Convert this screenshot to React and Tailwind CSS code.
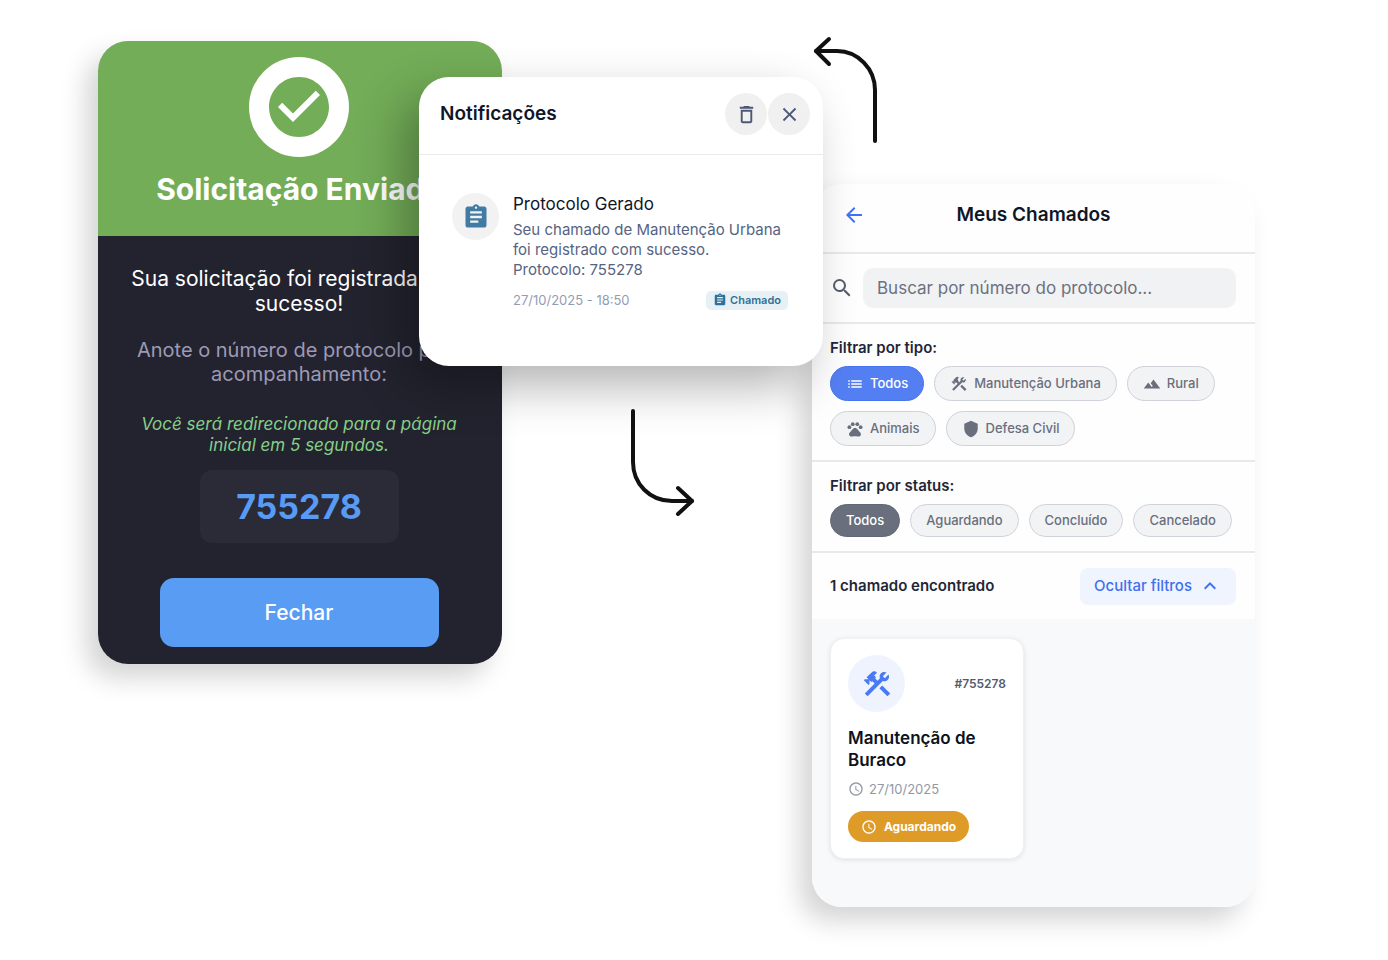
import { useState } from 'react'
import clsx from 'clsx'
import {
    MdAccessTime,
    MdArrowBack,
    MdAssignment,
    MdCheckCircle,
    MdClose,
    MdConstruction,
    MdDeleteOutline,
    MdKeyboardArrowUp,
    MdList,
    MdPets,
    MdSearch,
    MdShield,
    MdTerrain,
} from 'react-icons/md'

const TYPES = [
    { id: 'todos', label: 'Todos', icon: MdList },
    { id: 'manutencao', label: 'Manutenção Urbana', icon: MdConstruction },
    { id: 'rural', label: 'Rural', icon: MdTerrain },
    { id: 'animais', label: 'Animais', icon: MdPets },
    { id: 'defesa', label: 'Defesa Civil', icon: MdShield },
]

const STATUSES = ['Todos', 'Aguardando', 'Concluído', 'Cancelado']

function SuccessCard() {
    return (
        <section className="flex-[404_1_0] min-w-0 mt-[41px] rounded-[30px] overflow-hidden text-center shadow-[-12px_14px_26px_rgba(0,0,0,0.17)]">
            <div className="bg-[#73ad58] h-[195px] pt-4 pr-[2px] flex flex-col items-center">
                <div className="size-[100px] rounded-full bg-white flex items-center justify-center">
                    <MdCheckCircle className="size-[72px] text-[#73ad58]" />
                </div>
                <h1 className="mt-3 text-[30px] leading-10 font-bold text-white whitespace-nowrap">Solicitação Enviada</h1>
            </div>

            <div className="bg-[#23232f] pt-[30px] pr-[2px] pb-[17px] flex flex-col items-center">
                <p className="text-[21px] leading-[25px] text-white">
                    Sua solicitação foi registrada com<br />sucesso!
                </p>
                <p className="mt-[22px] text-[20px] leading-6 text-[#9d9ab5]">
                    Anote o número de protocolo para<br />acompanhamento:
                </p>
                <p className="mt-7 text-[17px] leading-[21px] italic text-[#86cf88]">
                    Você será redirecionado para a página<br />inicial em 5 segundos.
                </p>
                <div className="mt-[14px] w-[199px] h-[73px] rounded-xl bg-[#2b2a37] flex items-center justify-center text-[34px] font-bold text-[#579bf5]">
                    755278
                </div>
                <button className="mt-[35px] w-[279px] h-[69px] rounded-[14px] bg-[#599cf4] text-[21px] font-medium text-white">
                    Fechar
                </button>
            </div>
        </section>
    )
}

function Notifications() {
    return (
        <section className="h-[289px] rounded-[30px] bg-white shadow-[-16px_20px_48px_rgba(0,0,0,0.3)]">
            <header className="h-[78px] pl-[21px] pr-[13px] pb-[3px] flex items-center border-b border-[#ebebed]">
                <h2 className="flex-1 text-[19px] font-semibold text-[#10162a]">Notificações</h2>
                <div className="flex gap-px text-[#4c5876]">
                    <button aria-label="Limpar notificações" className="size-[42px] rounded-full bg-[#f0f0f0] flex items-center justify-center">
                        <MdDeleteOutline className="size-[23px]" />
                    </button>
                    <button aria-label="Fechar notificações" className="size-[42px] rounded-full bg-[#f0f0f0] flex items-center justify-center">
                        <MdClose className="size-[23px]" />
                    </button>
                </div>
            </header>

            <article className="pt-[38px] pl-[33px] pr-[35px] flex gap-[14px]">
                <div className="size-[47px] shrink-0 rounded-full bg-[#f2f2f2] flex items-center justify-center">
                    <MdAssignment className="size-7 text-[#417ba3]" />
                </div>
                <div className="flex-1 min-w-0">
                    <h3 className="text-[17px] leading-[22px] text-[#10162a]">Protocolo Gerado</h3>
                    <p className="mt-[5px] text-[15px] leading-5 text-[#566382] whitespace-nowrap">
                        Seu chamado de Manutenção Urbana<br />
                        foi registrado com sucesso.<br />
                        Protocolo: 755278
                    </p>
                    <div className="mt-[10px] flex items-center justify-between">
                        <time className="text-[13px] leading-5 text-[#929db4]">27/10/2025 - 18:50</time>
                        <span className="h-[19px] px-[7px] rounded-[5px] bg-[#e7f0f4] text-[#2f7199] text-[11px] font-semibold flex items-center gap-[3px]">
                            <MdAssignment className="size-[14px]" />
                            Chamado
                        </span>
                    </div>
                </div>
            </article>
        </section>
    )
}

function TicketCard() {
    return (
        <article className="w-[194px] h-[221px] px-[17px] pt-4 rounded-[14px] bg-white border border-[#f0f1f3] shadow-[0_1px_5px_rgba(0,0,0,0.1)]">
            <div className="flex items-center justify-between">
                <div className="size-[57px] rounded-full bg-[#eef3fe] flex items-center justify-center">
                    <MdConstruction className="size-8 text-[#4a7af2]" />
                </div>
                <span className="text-[12px] font-semibold text-[#525a6b]">#755278</span>
            </div>
            <h3 className="mt-[15px] text-[17px] leading-[22px] font-semibold text-[#0d1220]">Manutenção de Buraco</h3>
            <p className="mt-2 flex items-center gap-[5px] text-[13px] leading-5 text-[#9398a5]">
                <MdAccessTime className="size-4" />
                27/10/2025
            </p>
            <span className="mt-3 w-[121px] h-[31px] rounded-full bg-[#df9b27] text-white text-[12px] font-bold flex items-center justify-center gap-[7px]">
                <MdAccessTime className="size-4" />
                Aguardando
            </span>
        </article>
    )
}

function Tickets() {
    const [type, setType] = useState('todos')
    const [status, setStatus] = useState('Todos')

    return (
        <section className="mt-[39px] rounded-[30px] overflow-hidden bg-[#fefefe] shadow-[-12px_14px_26px_rgba(0,0,0,0.17)]">
            <header className="h-[70px] px-[30px] pb-[6px] grid grid-cols-[24px_1fr_24px] items-center border-b-2 border-[#e8e9ec]">
                <button aria-label="Voltar" className="text-[#3f73f3]">
                    <MdArrowBack className="size-6" />
                </button>
                <h2 className="text-center text-[19px] font-semibold text-[#10162a]">Meus Chamados</h2>
            </header>

            <div className="h-[70px] pl-[18px] pr-[19px] flex items-center gap-[9px] border-b-2 border-[#e8e9ec]">
                <label htmlFor="busca" aria-label="Buscar protocolo">
                    <MdSearch className="size-6 text-[#565d6e]" />
                </label>
                <input
                    id="busca"
                    type="text"
                    placeholder="Buscar por número do protocolo..."
                    className="flex-1 min-w-0 h-10 px-[14px] rounded-[10px] bg-[#f1f2f4] text-[17px] text-[#111827] placeholder:text-[#6c7180] outline-none"
                />
            </div>

            <div className="pl-[18px] pr-[19px] pt-[14px] pb-[14px] border-b-2 border-[#e8e9ec]">
                <h3 className="text-[15px] leading-5 font-semibold text-[#1f2636]">Filtrar por tipo:</h3>
                <div className="mt-2 flex flex-wrap gap-[10px]">
                    {TYPES.map(({ id, label, icon: Icon }) => (
                        <button
                            key={id}
                            onClick={() => setType(id)}
                            className={clsx(
                                'h-[35px] px-[15px] rounded-full border flex items-center gap-[6px] text-[13px] font-medium whitespace-nowrap',
                                type === id ? 'bg-[#547ff2] border-[#4474f0] text-white' : 'bg-[#f2f3f5] border-[#cfd2d8] text-[#696f7d]'
                            )}
                        >
                            <Icon className="size-[18px]" />
                            {label}
                        </button>
                    ))}
                </div>
            </div>

            <div className="pl-[18px] pr-[19px] pt-[14px] pb-[14px] border-b-2 border-[#e8e9ec]">
                <h3 className="text-[15px] leading-5 font-semibold text-[#1f2636]">Filtrar por status:</h3>
                <div className="mt-2 flex gap-[10px]">
                    {STATUSES.map(s => (
                        <button
                            key={s}
                            onClick={() => setStatus(s)}
                            className={clsx(
                                'h-[33px] px-[15px] rounded-full border text-[13px] font-medium whitespace-nowrap',
                                status === s ? 'bg-[#6a6f7d] border-[#626775] text-white' : 'bg-[#f2f3f5] border-[#cfd2d8] text-[#696f7d]'
                            )}
                        >
                            {s}
                        </button>
                    ))}
                </div>
            </div>

            <div className="h-[66px] pl-[18px] pr-[19px] flex items-center justify-between">
                <p className="text-[15px] font-semibold text-[#1f2636]">1 chamado encontrado</p>
                <button className="h-[37px] px-[14px] rounded-lg bg-[#eff4fe] text-[#3f70ee] text-[15px] font-medium flex items-center gap-[6px]">
                    Ocultar filtros
                    <MdKeyboardArrowUp className="size-6" />
                </button>
            </div>

            <div className="bg-[#f8f9fa] px-[18px] pt-[19px] pb-12">
                <TicketCard />
            </div>
        </section>
    )
}

function ArrowLeft() {
    return (
        <svg className="ml-px w-[66px] h-[108px] overflow-visible" viewBox="0 0 66 108" fill="none" stroke="#111" strokeWidth="4" strokeLinecap="round" strokeLinejoin="round">
            <path d="M62 104V53C62 32 45 14 24 14H3" />
            <path d="M16 2L3 14L16 27" />
        </svg>
    )
}

function ArrowRight() {
    return (
        <svg className="w-[66px] h-[108px]" viewBox="0 0 66 108" fill="none" stroke="#111" strokeWidth="4" strokeLinecap="round" strokeLinejoin="round">
            <path d="M4 3V54C4 76 21 93 43 93H63" />
            <path d="M49 80L63 93L49 106" />
        </svg>
    )
}

export default function App() {
    return (
        <main className="min-h-screen bg-white pl-[98px] pr-[133px] pb-[53px] flex items-start font-['Inter',sans-serif]">
            <SuccessCard />
            <div className="relative z-10 flex-[404_1_0] min-w-0 -ml-[83px] pt-[77px]">
                <Notifications />
                <div className="mt-[42px] pl-[210px]">
                    <ArrowRight />
                </div>
            </div>
            <div className="flex-[443_1_0] min-w-0 -ml-[11px] pt-[37px]">
                <ArrowLeft />
                <Tickets />
            </div>
        </main>
    )
}
